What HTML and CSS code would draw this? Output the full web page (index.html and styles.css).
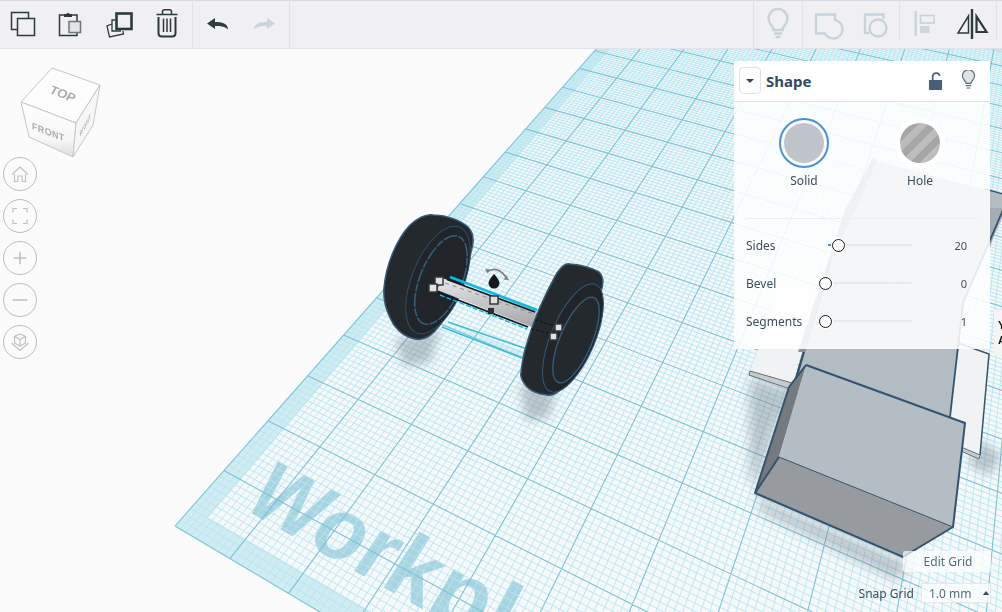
FILE: index.html
```html
<!DOCTYPE html>
<html lang="en">
<head>
<meta charset="utf-8">
<title>Workplane editor</title>
<link rel="stylesheet" href="styles.css">
</head>
<body>
<div class="app">
  <header class="toolbar">
    <div class="tool-group">
      <button class="tool"><svg viewBox="0 0 48 48" class="ico"><rect x="11.5" y="12.5" width="17" height="17" class="dark-line"/><rect x="17.5" y="18.5" width="17" height="17" class="dark-line bg-fill"/></svg></button>
      <button class="tool"><svg viewBox="48 0 48 48" class="ico"><rect x="59.5" y="15" width="17.5" height="20.5" class="dark-line"/><path d="M64 17v-3h2.2a2.2 2.2 0 0 1 3.6 0H72v3z" fill="#2c3a3e"/><rect x="69" y="21.5" width="11.5" height="11" fill="#e3e4e6" stroke="#6d7678" stroke-width="1.5"/></svg></button>
      <button class="tool"><svg viewBox="96 0 48 48" class="ico"><rect x="116.5" y="13.5" width="15" height="15.5" fill="none" stroke="#2c3a3e" stroke-width="2.6"/><path d="M115 20h-3v11h9M112 24l-5 2 2.500 11 14-3-.5-3" fill="none" stroke="#2c3a3e" stroke-width="1.3"/></svg></button>
      <button class="tool"><svg viewBox="144 0 48 48" class="ico"><path d="M156.500 14.500h21M162.500 14v-2.500q0-1.800 2-1.800h5q2 0 2 1.800V14" class="dark-line"/><path d="M158.500 17v16q0 3.500 3.500 3.500h10q3.500 0 3.500-3.500V17" fill="none" stroke="#2c3a3e" stroke-width="2"/><path d="M163.500 18.500v13.500M167 18.500v13.500M170.500 18.500v13.500" class="dark-line"/></svg></button>
    </div>
    <div class="tool-group">
      <button class="tool"><svg viewBox="192 0 48 48" class="ico"><path d="M206 23.500l8-5.500v4c7 0 13 1.500 13 7.500-3-3-7-3.500-13-3.500v3z" fill="#2d3e40"/></svg></button>
      <button class="tool"><svg viewBox="240 0 48 48" class="ico"><path d="M274 23.500l-8-5.500v4c-7 0-13 1.500-13 7.500 3-3 7-3.500 13-3.500v3z" fill="#c9d5dc"/></svg></button>
    </div>
    <div class="tool-spacer"></div>
    <div class="tool-group tool-group-left">
      <button class="tool"><svg viewBox="754 0 48 48" class="ico"><path d="M773.500 30c0-4-5-5.500-5-11.500a9.500 9.500 0 0 1 19 0c0 6-5 7.500-5 11.500z" class="pale-line"/><path d="M774 33.500h8M775.500 37h5" class="pale-line"/></svg></button>
    </div>
    <div class="tool-group tool-group-left">
      <button class="tool"><svg viewBox="803 0 48 48" class="ico"><path d="M816 14.500h19v5.500a9.300 9.300 0 1 1-10 13.500h-9z" class="pale-line"/></svg></button>
      <button class="tool"><svg viewBox="851 0 48 48" class="ico"><path d="M869 33h-4V14.500h18.500V19" class="pale-line"/><circle cx="878" cy="28" r="8.500" class="pale-line"/></svg></button>
    </div>
    <div class="tool-group tool-group-left tool-group-right">
      <button class="tool"><svg viewBox="900 0 48 48" class="ico"><path d="M915.700 11v25" class="pale-line"/><rect x="920.500" y="15.500" width="13.500" height="7.500" class="pale-thin"/><rect x="920" y="26" width="9.500" height="7" fill="#ccd6dc"/></svg></button>
      <button class="tool"><svg viewBox="948 0 48 48" class="ico"><path d="M972 9v30" fill="none" stroke="#2c3a3e" stroke-width="2.400"/><path d="M968.500 16v17H958z" class="dark-line"/><path d="M976.500 16.500v15.500H986.500z" fill="none" stroke="#2c3a3e" stroke-width="2.200"/></svg></button>
    </div>
  </header>

  <main class="stage">
    <div class="plane"><span class="plane-label">Workplane</span></div>

    <svg class="scene" viewBox="0 49 1002 563">
      <path id="grid-minor" class="grid-minor"/>
      <path id="grid-major" class="grid-major"/>
    </svg>

    <svg class="scene" viewBox="0 49 1002 563">
      <defs>
        <filter id="blur8" x="-30%" y="-30%" width="160%" height="160%"><feGaussianBlur stdDeviation="6"/></filter>
        <filter id="blur4" x="-30%" y="-30%" width="160%" height="160%"><feGaussianBlur stdDeviation="5"/></filter>
        <linearGradient id="axle" x1="0" y1="0" x2="0.1" y2="1"><stop offset="0" stop-color="#e6e7e8"/><stop offset="1" stop-color="#a9abad"/></linearGradient>
        <linearGradient id="cubeFront" x1="0" y1="0" x2="0" y2="1"><stop offset="0" stop-color="#ffffff"/><stop offset="0.7" stop-color="#f6f6f6"/><stop offset="1" stop-color="#dcdcdc"/></linearGradient>
      </defs>

      <!-- ground shadows -->
      <g fill="#6f808c" opacity="0.42">
        <path d="M396 340L440 330 430 362 404 366z" filter="url(#blur4)"/>
        <path d="M520 385L558 385 548 418 526 420z" filter="url(#blur4)"/>
        <path d="M750 378L800 392 775 425 755 490 762 512 896 580 912 566 760 498 750 475z" filter="url(#blur8)"/>
        <path d="M980 440L1002 455 990 475 968 465z" filter="url(#blur4)"/>
      </g>

      <!-- ghost of the axle on the ground -->
      <path d="M448 322L530 350M442 327L522 358" stroke="#37bfdc" stroke-width="1.400" fill="none"/>
      <path d="M444 324L526 353 522 358 442 327z" fill="#37bfdc" opacity="0.15"/>

      <!-- back shapes on the right -->
      <path d="M877 161L1012 197 963 303 830 262 856 210z" fill="#b3bcc3"/>
      <path d="M990 208H1002V210L990 248z" fill="#a4adb4"/>
      <path d="M985 189L1010 196" stroke="#34536e" stroke-width="1.500"/>
      <path d="M1006 203L963 303" stroke="#34536e" stroke-width="1.800"/>
      <path d="M958 343L989 354 980 455 961 447 950 417z" fill="#f1f2f3"/>
      <path d="M958 343L989 354 980 455" fill="none" stroke="#34536e" stroke-width="1.500"/>
      <path d="M961 447L980 455 979 459 963 452z" fill="#c9cbcd" stroke="#5d6f7e" stroke-width="1"/>
      <path d="M782 285L818 297 792 383 750 371z" fill="#f1f2f3"/>
      <path d="M750 371L749 375 790 389 792 383z" fill="#c9cbcd" stroke="#5d6f7e" stroke-width="1"/>
      <path d="M830 262L963 303 950 417 795 382z" fill="#b3bcc3"/>
      <path d="M963 303L950 417" fill="none" stroke="#34536e" stroke-width="1.800"/>
      <path d="M830 262L795 382" fill="none" stroke="#34536e" stroke-width="2.500"/>
      <path d="M873 158L877 161 856 210 830 262 805 352 798 352 845 210z" fill="#8f9498"/>

      <!-- front box -->
      <path d="M806 365L789 387 755 493 779 457z" fill="#757a7e"/>
      <path d="M806 365L965 423 953 527 779 457z" fill="#b4bcc4"/>
      <path d="M779 457L953 527 903 557 755 493z" fill="#979b9f"/>
      <path d="M806 365L965 423 953 527 903 557 755 493 789 387 806 365M779 457L755 493" fill="none" stroke="#34536e" stroke-width="2" stroke-linejoin="round"/>
      <path d="M779 457L953 527" fill="none" stroke="#34536e" stroke-width="1"/>

      <!-- left wheel -->
      <path d="M433 215C446 215 460 220 468 227C474 233 474 243 471 252C466 280 455 305 440 325C432 336 424 341 415 339C405 337 399 332 394 325C386 312 383 300 384 288C386 265 396 240 410 225C418 218 426 214 433 215Z" fill="#24292e" stroke="#3a5a78" stroke-width="1.500"/>
      <ellipse cx="438" cy="280" rx="26" ry="57" transform="rotate(22 438 280)" fill="#212529" stroke="#2f4e6a" stroke-width="1"/>
      <ellipse cx="441" cy="280" rx="21" ry="47" transform="rotate(22 441 280)" fill="none" stroke="#35607f" stroke-width="1.500" stroke-dasharray="14 1.500 8 1.500"/>

      <!-- axle -->
      <path d="M442 278L537 310 532 327 437 290z" fill="url(#axle)"/>
      <path d="M445 283L534 314" stroke="#777" stroke-width="0.800" stroke-dasharray="4 4"/>
      <path d="M450 277L537 310" stroke="#05bde6" stroke-width="2.500"/>
      <path d="M447 279.500L535 312" stroke="#15191c" stroke-width="1.400"/>
      <path d="M437 292L528 327" stroke="#15191c" stroke-width="1.800"/>
      <path d="M440 295L527 329" stroke="#05bde6" stroke-width="1.400" stroke-dasharray="5 2"/>

      <!-- right wheel -->
      <path d="M586 338a6.500 6.500 0 0 1 2 12l-5 3" fill="none" stroke="#15191c" stroke-width="1.300"/>
      <path d="M570 264C582 265 592 268 599 272C604 277 604 286 600 293C596 310 590 325 583 340C577 358 570 374 563 387C558 393 552 396 547 395C538 394 531 391 527 387C522 381 520 377 521 373C522 362 524 352 527 343C531 330 535 318 540 307C546 294 551 283 557 273C561 267 565 263 570 264Z" fill="#24292e" stroke="#3a5a78" stroke-width="1.500"/>
      <ellipse cx="573" cy="338" rx="22" ry="58" transform="rotate(23 573 338)" fill="#212529" stroke="#33587a" stroke-width="1"/>
      <ellipse cx="576" cy="340" rx="16" ry="46" transform="rotate(23 576 340)" fill="#24292e" stroke="#35607f" stroke-width="1.300"/>
      <path d="M535 320L556 326M531 329L553 334" stroke="#0b0d0f" stroke-width="0.800" stroke-dasharray="3 2"/>

      <!-- handles -->
      <g class="handles">
        <rect x="435" y="277" width="8" height="8"/>
        <rect x="429" y="284" width="8" height="8"/>
        <rect x="490" y="296" width="8" height="8"/>
        <rect x="555" y="324" width="7" height="7"/>
        <rect x="550" y="333" width="7" height="7"/>
      </g>
      <rect x="488" y="308" width="6" height="6" fill="#2a2e31"/>

      <!-- rotate hint -->
      <path d="M487 272Q497 265 506 277" fill="none" stroke="#7b7f82" stroke-width="1.600"/>
      <path d="M485 269l5 .5-2.500 4zM509 280l-5.500-.5 3-4z" fill="#7b7f82"/>
      <path d="M494 274q5.500 6 5.500 9a5.500 5.500 0 0 1-11 0q0-3 5.500-9z" fill="#16191c"/>

      <!-- view cube -->
      <path d="M52 68L100 85 76 123 21 102z" fill="#fdfdfd" stroke="#c6c6c6"/>
      <path d="M21 102L76 123 73 157 29 137z" fill="url(#cubeFront)" stroke="#c6c6c6"/>
      <path d="M100 85L76 123 73 157 93 125z" fill="#f7f7f7" stroke="#c6c6c6"/>
      <text class="cube-top" transform="matrix(.93 .36 -.3 .9 49 93)">TOP</text>
      <text class="cube-front" transform="matrix(.94 .36 0 1 32 129)">FRONT</text>
      <text class="cube-side" transform="matrix(.5 -.86 .1 1 80 137)">RIGHT</text>
    </svg>

    <nav class="nav-buttons">
      <button class="nav-btn"><svg viewBox="0 0 20 20" class="nav-ico"><path d="M2 10.500L10 3l8 7.500M4.500 10v7.500h3.300v-5.500h4.400v5.500h3.300V10"/></svg></button>
      <button class="nav-btn"><svg viewBox="0 0 20 20" class="nav-ico"><path d="M3 6.500V2.500h4M13 2.500h4v4M17 13.500v4h-4M7 17.500H3v-4"/></svg></button>
      <button class="nav-btn"><svg viewBox="0 0 20 20" class="nav-ico nav-ico-bold"><path d="M10 3v14M3 10h14"/></svg></button>
      <button class="nav-btn"><svg viewBox="0 0 20 20" class="nav-ico nav-ico-bold"><path d="M2 10h16"/></svg></button>
      <button class="nav-btn"><svg viewBox="0 0 20 20" class="nav-ico"><path d="M10 2l5.500 2.500v6.500L10 14l-5.500-3V4.500zM4.500 4.500L10 7.500l5.500-3M10 7.500V14M1.500 11L10 18.500 18.500 11"/></svg></button>
    </nav>

    <aside class="panel">
      <div class="panel-head">
        <button class="panel-toggle"><span class="caret"></span></button>
        <span class="panel-title">Shape</span>
        <svg class="panel-ico lock" viewBox="0 0 16 20"><path d="M1 9h14v9.500q0 1-1 1H2q-1 0-1-1z" fill="#46607a"/><path d="M5 9V5.500a3.800 3.800 0 0 1 7.500-1" fill="none" stroke="#46607a" stroke-width="1.800"/></svg>
        <svg class="panel-ico bulb" viewBox="0 0 16 22"><path d="M5.500 14c0-2.500-4-3.500-4-8a6.500 6.500 0 0 1 13 0c0 4.500-4 5.500-4 8z" fill="#dfe3e6" stroke="#5b6d7c" stroke-width="1.300"/><path d="M5 16.500h6M6 19h4" stroke="#5b6d7c" stroke-width="1.300" fill="none"/></svg>
      </div>
      <div class="modes">
        <div class="mode"><span class="swatch swatch-on"><span class="swatch-solid"></span></span><span class="mode-label">Solid</span></div>
        <div class="mode"><span class="swatch"><span class="swatch-hole"></span></span><span class="mode-label">Hole</span></div>
      </div>
      <div class="props">
        <div class="prop">
          <span class="prop-label">Sides</span>
          <span class="slider"><span class="slider-fill"></span><span class="knob knob-sides"></span></span>
          <span class="prop-value">20</span>
        </div>
        <div class="prop">
          <span class="prop-label">Bevel</span>
          <span class="slider"><span class="knob"></span></span>
          <span class="prop-value">0</span>
        </div>
        <div class="prop">
          <span class="prop-label">Segments</span>
          <span class="slider"><span class="knob"></span></span>
          <span class="prop-value">1</span>
        </div>
      </div>
    </aside>

    <div class="edge-tab">Y<br>A</div>

    <div class="grid-controls">
      <button class="edit-grid">Edit Grid</button>
      <div class="snap">
        <span class="snap-label">Snap Grid</span>
        <span class="snap-box">1.0 mm <span class="snap-caret"></span></span>
      </div>
    </div>
  </main>
</div>
<script src="grid.js"></script>
</body>
</html>
```
FILE: styles.css
```css
* { box-sizing: border-box; }
html, body { margin: 0; height: 100%; }
body { font-family: "Noto Sans", "Liberation Sans", sans-serif; color: #3c4e5e; background: #fbfbfb; overflow: hidden; }
button { font: inherit; color: inherit; border: 0; background: none; padding: 0; }

.app { width: 1002px; height: 612px; display: flex; flex-direction: column; }

.toolbar { flex: 0 0 49px; height: 49px; display: flex; background: #f0f0f3; border-bottom: 1px solid #dfe2e8; box-shadow: inset 0 2px 1px -1px #d6d7df; position: relative; z-index: 2; }
.tool-group { display: flex; border-right: 1px solid #dfe2e6; }
.tool-group-left { border-right: 0; border-left: 1px solid #dfe2e6; }
.tool-group-right { border-right: 1px solid #dfe2e6; margin-right: 5px; height: 40px; }
.tool-spacer { flex: 1; }
.tool { width: 48px; height: 48px; display: block; flex: none; }
.tool-group-right .tool { height: 40px; }
.ico { width: 48px; height: 48px; display: block; overflow: visible; }
.dark-line { fill: none; stroke: #2c3a3e; stroke-width: 1.5; }
.bg-fill { fill: #f0f0f3; }
.pale-line { fill: none; stroke: #c9d4da; stroke-width: 2.4; }
.pale-thin { fill: none; stroke: #c9d4da; stroke-width: 1.6; }

.stage { flex: 1; position: relative; overflow: hidden; }

.plane {
  position: absolute; left: 0; top: 0; width: 2000px; height: 2000px;
  transform-origin: 0 0;
  transform: matrix3d(.4769,.16574,0,-.000315, -.61585,.31584,0,-.000565, 0,0,1,0, 1406.7,-154.67,0,2.13);
  background-color: #f7f8f9;
  box-shadow: inset 0 0 0 32px rgba(110, 200, 225, .28);
}
.plane-label {
  position: absolute; left: 60px; bottom: 63px;
  font: 700 123px/90px "Liberation Sans", sans-serif;
  color: rgba(60, 160, 190, .42); white-space: nowrap; height: 90px;
}

.scene { position: absolute; left: 0; top: 0; width: 1002px; height: 563px; }
.grid-minor { fill: none; stroke: #b4e6f1; stroke-width: .9; }
.grid-major { fill: none; stroke: #78c4d9; stroke-width: 1.100; }
.handles rect { fill: #e2e2e2; stroke: #33383c; stroke-width: 1.500; }
.cube-top, .cube-front, .cube-side { font-family: "Liberation Sans", sans-serif; font-weight: 700; fill: #a7aab0; }
.cube-top { font-size: 13px; font-style: italic; }
.cube-front { font-size: 9.500px; letter-spacing: .4px; }
.cube-side { font-size: 6.500px; letter-spacing: .5px; }

.nav-buttons { position: absolute; left: 3px; top: 108px; display: flex; flex-direction: column; gap: 8px; }
.nav-btn { width: 34px; height: 34px; border-radius: 50%; border: 1px solid #bcbcbc; background: #fbfbfb; display: flex; align-items: center; justify-content: center; }
.nav-ico { width: 20px; height: 20px; fill: none; stroke: #bfc1c3; stroke-width: 1.2; }
.nav-ico-bold { stroke-width: 1.800; width: 18px; height: 18px; }

.panel { position: absolute; left: 734px; top: 12px; width: 256px; height: 288px; background: rgba(255,255,255,.87); border-radius: 3px; display: flex; flex-direction: column; }
.panel-head { height: 41px; flex: none; display: flex; align-items: center; padding: 0 14px 1px 5px; background: #fff; border-bottom: 1px solid #dfe3e6; border-radius: 3px 3px 0 0; }
.panel-toggle { width: 22px; height: 27px; border: 1px solid #e0e3e8; border-radius: 4px; display: flex; align-items: center; justify-content: center; }
.caret { width: 0; height: 0; border-left: 4px solid transparent; border-right: 4px solid transparent; border-top: 4px solid #34495c; }
.panel-title { margin-left: 5px; font-size: 15px; font-weight: 700; color: #34495c; flex: 1; }
.panel-ico { display: block; flex: none; }
.lock { width: 15px; height: 20px; margin-right: 18px; }
.bulb { width: 15px; height: 21px; }

.modes { display: flex; padding: 16px 12px 0; height: 116px; flex: none; }
.mode { width: 116px; display: flex; flex-direction: column; align-items: center; gap: 5px; }
.swatch { width: 50px; height: 50px; border-radius: 50%; background: #fff; display: flex; align-items: center; justify-content: center; flex: none; }
.swatch-on { border: 2px solid #4a90d9; }
.swatch-solid, .swatch-hole { width: 40px; height: 40px; border-radius: 50%; display: block; }
.swatch-solid { background: #bfc5cb; }
.swatch-hole { background: repeating-linear-gradient(135deg, #bdbdbd 0 7px, #a6a6a6 7px 14px); }
.mode-label { font-size: 12px; line-height: 16px; color: #3c4e5e; }

.props { margin: 0 12px; padding-top: 7px; border-top: 1px solid #eceeef; display: flex; flex-direction: column; flex: none; }
.prop { height: 38px; display: flex; align-items: center; padding-right: 11px; font-size: 12px; color: #3c4e5e; }
.prop-label { width: 82px; flex: none; }
.slider { width: 84px; height: 2px; background: #e8eaea; position: relative; flex: none; }
.slider-fill { position: absolute; left: 0; top: 0; width: 4px; height: 2px; background: #4a90d9; }
.knob { position: absolute; left: -9px; top: -5px; width: 13px; height: 13px; border-radius: 50%; background: #fff; border: 1.500px solid #15191c; box-shadow: 0 0 0 1px #fff; }
.knob-sides { left: 4px; }
.prop-value { flex: 1; text-align: right; font-size: 11px; }

.edge-tab { position: absolute; left: 994px; top: 261px; width: 12px; height: 45px; background: #f4f5f5; font: 700 11px/15px "Liberation Sans", sans-serif; color: #111; padding: 8px 0 0 4px; overflow: hidden; }

.grid-controls { position: absolute; right: 11px; bottom: 9px; display: flex; flex-direction: column; align-items: flex-end; gap: 11px; }
.edit-grid { width: 88px; height: 21px; background: rgba(255,255,255,.7); border-radius: 2px; font-size: 12px; line-height: 21px; color: #5a6b7a; padding-left: 2px; text-align: center; }
.snap { display: flex; align-items: center; gap: 7px; font-size: 12px; color: #3c4e5e; }
.snap-label { white-space: nowrap; }
.snap-box { width: 70px; height: 20px; background: rgba(255,255,255,.75); border: 1px solid #e6e8ea; display: flex; align-items: center; padding-left: 7px; color: #5a6b7a; gap: 3px; white-space: pre; }
.snap-caret { width: 0; height: 0; margin-left: 5px; border-left: 3px solid transparent; border-right: 3px solid transparent; border-bottom: 4px solid #34495c; }
```
FILE: grid.js
```js
// Projects the 20 x 20 workplane grid (10 minor cells per major cell) onto the canvas.
(function () {
  var a = -0.0315, b = 0.0565;
  var vpU = [-1514, -477], vpV = [1090, -510], origin = [175, 526];

  function project(u, v) {
    var w = a * u + b * v + 1;
    return ((a * u * vpU[0] + b * v * vpV[0] + origin[0]) / w).toFixed(1) + " " +
           ((a * u * vpU[1] + b * v * vpV[1] + origin[1]) / w).toFixed(1);
  }

  var minor = "", major = "";
  for (var i = 0; i <= 200; i++) {
    var t = i / 10;
    var seg = "M" + project(t, 0) + "L" + project(t, 20) + "M" + project(0, t) + "L" + project(20, t);
    if (i % 10 === 0) { major += seg; } else { minor += seg; }
  }
  document.getElementById("grid-minor").setAttribute("d", minor);
  document.getElementById("grid-major").setAttribute("d", major);
})();
```
